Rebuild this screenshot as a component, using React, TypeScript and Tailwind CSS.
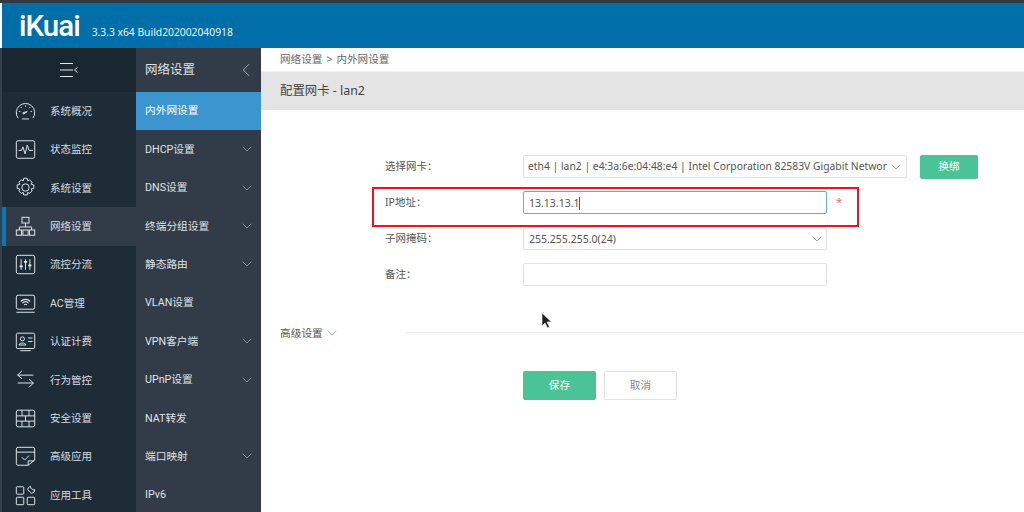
import React from "react";
import { ChevronDown, ChevronLeft } from "lucide-react";

const font = { fontFamily: '"Noto Sans","Noto Sans CJK SC",sans-serif' };
const side = { fontFamily: 'Roboto,"Noto Sans CJK SC",sans-serif' };
const S = { fill: "none", stroke: "#e5e9ec", strokeWidth: 1.1 } as const;

const icons: React.ReactNode[] = [
  <><path d="M3.500 19.500a10.500 10.500 0 1 1 17 0" /><path d="M9 13.500l5-1.500-4.200 3z" /><path d="M4.500 12h1.500M18 12h1.500M12 5v1.500M6.800 7l1 1M17.200 7l-1 1M8 20.500h8" /></>,
  <><rect x="1.500" y="2" width="21" height="20" rx="2" /><path d="M4 13h3.500l1.500-4 2.500 8 2.500-10 2 6h4.500" /></>,
  <><path d="M10 1.500h4l.6 2.900 2.200-1.100 2.800 2.700-1.100 2.300 3 .7v4l-3 .7 1.100 2.300-2.800 2.700-2.200-1.100-.6 2.900h-4l-.6-2.900-2.200 1.100-2.800-2.700 1.100-2.300-3-.7v-4l3-.7-1.100-2.300 2.800-2.700 2.200 1.100z" /><circle cx="12" cy="12" r="4.200" /></>,
  <><rect x="8" y="1.500" width="8" height="6.500" /><path d="M12 8v4.500M5 16v-3.500h14v3.500" /><rect x="1.500" y="16" width="6" height="6" /><rect x="9" y="16" width="6" height="6" /><rect x="16.500" y="16" width="6" height="6" /></>,
  <><rect x="1.500" y="1.500" width="21" height="21" rx="2" /><path d="M7 6v12M12 6v12M17 6v12" /><path d="M5.200 14h3.600M10.200 9h3.600M15.200 13h3.600" strokeWidth="2" /></>,
  <><rect x="1.500" y="2.500" width="21" height="16" rx="2" /><path d="M1.500 22h21" /><path d="M6.500 9.500c3-3 8-3 11 0M8.500 11.500c2-1.800 5-1.800 7 0M10.500 13.500c1-.8 2-.8 3 0" strokeWidth="1.300" /></>,
  <><rect x="1.500" y="2.500" width="21" height="17.500" rx="1.500" /><circle cx="8.500" cy="9" r="2.300" /><path d="M4.500 16c.5-3 7.500-3 8 0zM15 8h5M15 12h5M6 22.500h12" /></>,
  <><path d="M3 7h18M3 7l5-5M3 7l5 4M21 16H3M21 16l-5-4.500M21 16l-5 5" /></>,
  <><rect x="1.500" y="2.500" width="21" height="19" rx="2" /><path d="M1.500 9h21M1.500 15h21M8 2.500V9M16 2.500V9M12 9v6M8 15v6.500M16 15v6.500" /></>,
  <><path d="M15 22H3.500a2 2 0 0 1-2-2V3.500a2 2 0 0 1 2-2h17a2 2 0 0 1 2 2V16z" /><path d="M1.500 7h21M8 13l3 3 5-5M15 22v-5h7" /></>,
  <><rect x="1.500" y="2" width="8.500" height="8.500" rx="1" /><rect x="1.500" y="14" width="8.500" height="8.500" rx="1" /><rect x="14" y="14" width="8.500" height="8.500" rx="1" /><path d="M15 3.500l2.500-2 1 2.500 2.500 1.500 1.500-.5-.5 3-3 1.500-4.500-4z" /></>,
];

const main = ["系统概况", "状态监控", "系统设置", "网络设置", "流控分流", "AC管理", "认证计费", "行为管控", "安全设置", "高级应用", "应用工具"];
const sub: [string, boolean][] = [["DHCP设置", true], ["DNS设置", true], ["终端分组设置", true], ["静态路由", true], ["VLAN设置", false], ["VPN客户端", true], ["UPnP设置", true], ["NAT转发", false], ["端口映射", true], ["IPv6", false]];

const Field = ({ label, children }: { label: string; children: React.ReactNode }) => (
  <div className="flex items-center h-[23px]">
    <div className="w-[138px] pt-[1px] text-[10.5px] text-[#555]">{label}</div>
    {children}
  </div>
);

export default function App() {
  return (
    <div style={font} className="w-[1024px] h-[512px] overflow-hidden bg-white flex flex-col">
      <div className="h-[3px] bg-[#34383d] shrink-0" />
      <header className="h-[45px] shrink-0 bg-[#006ea8] flex items-baseline ml-[2px] pl-[17px] pt-[8px] text-white">
        <span style={{ fontFamily: "Roboto,sans-serif" }} className="text-[29.5px] leading-[30px] font-medium tracking-[-1px]">iKuai</span>
        <span className="text-[10.3px] ml-[12px] text-[#eef5fa]">3.3.3 x64 Build202002040918</span>
      </header>
      <div className="flex flex-1 min-h-0">
        <aside className="w-[2px] bg-[#33404e] shrink-0" />
        <nav style={side} className="w-[134px] shrink-0 bg-[#1e2c38] text-[10.5px] text-[#d8dde1]">
          <div className="h-[44px] bg-[#1a2730] flex items-center justify-center">
            <svg width="20" height="16" viewBox="0 0 20 16" fill="none" stroke="#e5e9ec"><path d="M1 1.500h13M1 8h13M1 14.500h13M18.500 5.500l-3 2.500 3 2.500" /></svg>
          </div>
          {main.map((m, i) => (
            <div key={m} className={`h-[38.4px] flex items-center ${i === 3 ? "bg-[#323c49] border-l-[4px] border-[#0a78b8] pl-[9px]" : "pl-[13px]"}`}>
              <svg width="21" height="21" viewBox="0 0 24 24" {...S}>{icons[i]}</svg>
              <span className="ml-[14px] pt-[1px]">{m}</span>
            </div>
          ))}
        </nav>
        <div style={side} className="w-[125px] shrink-0 bg-[#323c49] text-[10.7px] text-[#dfe3e6]">
          <div className="h-[44px] flex items-center justify-between pl-[9px] pr-[4px] text-[12.5px]">
            <span className="pt-[1px]">网络设置</span><ChevronLeft size={22} strokeWidth={1} color="#aeb4ba" />
          </div>
          <div className="h-[38px] flex items-center pl-[9px] bg-[#3b96d0] text-white">内外网设置</div>
          {sub.map(([s, c]) => (
            <div key={s} className="h-[38.4px] flex items-center justify-between pl-[9px] pr-[6px]">
              <span className="pt-[1.5px]">{s}</span>{c && <ChevronDown size={16} strokeWidth={1} color="#aeb4ba" />}
            </div>
          ))}
        </div>
        <main className="flex-1 min-w-0">
          <div className="h-[24px] flex items-center pl-[19px] text-[10.6px] text-[#666] border-b border-[#f4f4f4]">网络设置<span className="mx-[4px]">&gt;</span>内外网设置</div>
          <div className="h-[38px] bg-[#e4e4e4] flex items-center pl-[19px] text-[12.4px] text-[#444]">配置网卡 - lan2</div>
          <div className="relative pl-[124px] pt-[45px]">
            <div className="flex flex-col gap-[13px]">
              <Field label="选择网卡：">
                <div className="w-[384px] h-[23px] border border-[#e2e2e2] rounded-[2px] flex items-center pl-[4px] pr-[1px] text-[10.35px] text-[#555] whitespace-nowrap overflow-hidden">
                  <span className="overflow-hidden w-[359px] shrink-0">eth4 | lan2 | e4:3a:6e:04:48:e4 | Intel Corporation 82583V Gigabit Network</span>
                  <ChevronDown size={16} strokeWidth={1} color="#777" className="shrink-0 ml-[1px]" />
                </div>
                <button className="ml-[13px] w-[58px] h-[24px] rounded-[2px] bg-[#4ac497] text-white text-[10.5px]">换绑</button>
              </Field>
              <Field label="IP地址：">
                <div className="w-[304px] h-[23px] border border-[#62aed6] rounded-[2px] flex items-center pl-[5px] pt-[2px] text-[10.5px] text-[#555]">
                  13.13.13.1<span className="w-px h-[13px] bg-[#555]" />
                </div>
                <span className="ml-[9px] text-[11px] text-[#ea6a72]">*</span>
              </Field>
              <Field label="子网掩码：">
                <div className="w-[304px] h-[23px] border border-[#e2e2e2] rounded-[2px] flex items-center justify-between pl-[5px] pr-[1px] text-[10.5px] text-[#555]">
                  <span className="pt-[2px]">255.255.255.0(24)</span><ChevronDown size={16} strokeWidth={1} color="#777" />
                </div>
              </Field>
              <Field label="备注：">
                <div className="w-[304px] h-[23px] border border-[#e2e2e2] rounded-[2px]" />
              </Field>
            </div>
            <div className="absolute left-[111px] top-[77px] w-[487px] h-[40px] border-2 border-[#f0121e]" />
          </div>
          <div className="relative flex items-center mt-[36px] pl-[19px] h-[22px]">
            <span className="text-[10.7px] text-[#555] w-[125px] flex items-center gap-[1px] shrink-0">高级设置<ChevronDown size={16} strokeWidth={1} color="#888" /></span>
            <div className="flex-1 h-px bg-[#eee] mt-[-1px]" />
            <svg className="absolute left-[280px] top-[-10px]" width="12" height="17" viewBox="0 0 12 17"><path d="M1 1v13l3-3 2.500 5 2-1-2.500-5h4.500z" fill="#222" stroke="#fff" strokeWidth=".6" /></svg>
          </div>
          <div className="flex gap-[8px] pl-[262px] mt-[27px]">
            <button className="w-[73px] h-[29px] rounded-[2px] bg-[#4ac497] text-white text-[10.7px]">保存</button>
            <button className="w-[73px] h-[29px] rounded-[2px] border border-[#e2e2e2] text-[#888] text-[10.7px]">取消</button>
          </div>
        </main>
      </div>
    </div>
  );
}
